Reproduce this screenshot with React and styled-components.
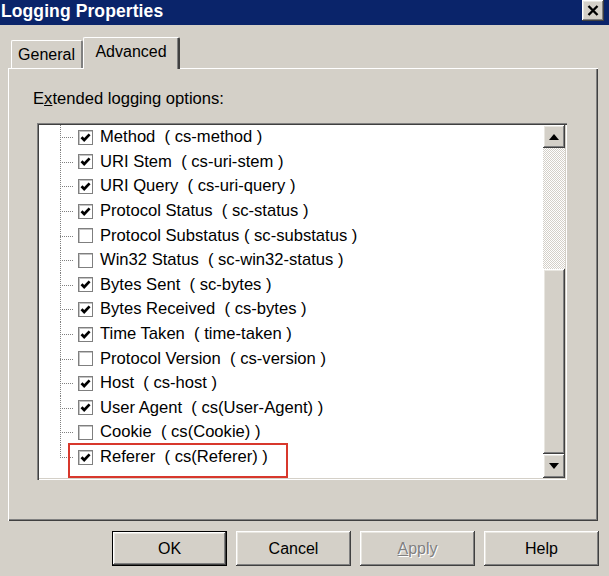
import React from 'react'
import styled, { createGlobalStyle, css } from 'styled-components'

const GlobalStyle = createGlobalStyle`
  html, body {
    margin: 0;
    padding: 0;
    background: #d4d0c8;
  }
  body {
    font-family: 'Liberation Sans', Arial, sans-serif;
    font-size: 16px;
    color: #000;
  }
`

const fields = [
  { label: 'Method', code: 'cs-method', on: true },
  { label: 'URI Stem', code: 'cs-uri-stem', on: true },
  { label: 'URI Query', code: 'cs-uri-query', on: true },
  { label: 'Protocol Status', code: 'sc-status', on: true },
  { label: 'Protocol Substatus', code: 'sc-substatus', on: false, tight: true },
  { label: 'Win32 Status', code: 'sc-win32-status', on: false },
  { label: 'Bytes Sent', code: 'sc-bytes', on: true },
  { label: 'Bytes Received', code: 'cs-bytes', on: true },
  { label: 'Time Taken', code: 'time-taken', on: true },
  { label: 'Protocol Version', code: 'cs-version', on: false },
  { label: 'Host', code: 'cs-host', on: true },
  { label: 'User Agent', code: 'cs(User-Agent)', on: true },
  { label: 'Cookie', code: 'cs(Cookie)', on: false },
  { label: 'Referer', code: 'cs(Referer)', on: true, marked: true },
]

const raised = css`
  background: #d4d0c8;
  box-shadow:
    inset -1px -1px #404040,
    inset 1px 1px #ffffff,
    inset -2px -2px #808080,
    inset 2px 2px #e8e6e0;
`

export default function App() {
  return (
    <>
      <GlobalStyle />
      <Window>
        <TitleBar>
          <Title>Logging Properties</Title>
          <CloseButton>
            <svg width="12" height="11" viewBox="0 0 12 11">
              <path d="M1.5 1 L10.5 10 M10.5 1 L1.5 10" stroke="#000" strokeWidth="2.4" />
            </svg>
          </CloseButton>
        </TitleBar>

        <TabStrip>
          <Tab>General</Tab>
          <Tab $active>Advanced</Tab>
        </TabStrip>

        <Panel>
          <Label>E<u>x</u>tended logging options:</Label>
          <ListBox>
            <Rows>
              {fields.map((f, i) => (
                <Row key={f.code}>
                  <Branch $last={i === fields.length - 1} />
                  <CheckBox>
                    {f.on && (
                      <svg width="11" height="11" viewBox="0 0 11 11">
                        <path d="M1.5 5.2 L4.2 8 L9.6 2.4" fill="none" stroke="#000" strokeWidth="2.7" />
                      </svg>
                    )}
                  </CheckBox>
                  <FieldText>
                    {f.label}{f.tight ? ' ' : '  '}( {f.code} )
                  </FieldText>
                  {f.marked && <Highlight />}
                </Row>
              ))}
            </Rows>
            <ScrollBar>
              <ArrowButton $h={23}>
                <svg width="10" height="6" viewBox="0 0 10 6">
                  <polygon points="5,0 10,6 0,6" fill="#000" />
                </svg>
              </ArrowButton>
              <Track />
              <Thumb />
              <ArrowButton $h={24}>
                <svg width="10" height="6" viewBox="0 0 10 6">
                  <polygon points="0,0 10,0 5,6" fill="#000" />
                </svg>
              </ArrowButton>
            </ScrollBar>
          </ListBox>
        </Panel>

        <ButtonRow>
          <Button $default>OK</Button>
          <Button>Cancel</Button>
          <Button $disabled><u>A</u>pply</Button>
          <Button>Help</Button>
        </ButtonRow>
      </Window>
    </>
  )
}

const Window = styled.div`
  width: 609px;
  height: 576px;
  display: flex;
  flex-direction: column;
  overflow: hidden;
`

const TitleBar = styled.div`
  height: 25px;
  background: #0a246a;
  display: flex;
  align-items: flex-start;
  justify-content: space-between;
  padding: 0 5px 0 1px;
  box-sizing: border-box;
`

const Title = styled.div`
  color: #fff;
  font-weight: bold;
  font-size: 17.5px;
  line-height: 23px;
  letter-spacing: 0.1px;
`

const CloseButton = styled.div`
  ${raised};
  width: 22px;
  height: 21px;
  display: flex;
  align-items: center;
  justify-content: center;
`

const TabStrip = styled.div`
  display: flex;
  align-items: flex-end;
  height: 31px;
  margin: 12px 0 0 11px;
  position: relative;
  z-index: 1;
`

const Tab = styled.div`
  box-sizing: border-box;
  display: flex;
  align-items: center;
  justify-content: center;
  background: #d4d0c8;
  width: ${p => (p.$active ? '97px' : '72px')};
  height: ${p => (p.$active ? '32px' : '28px')};
  margin-bottom: ${p => (p.$active ? '-1px' : '0')};
  padding-bottom: ${p => (p.$active ? '4px' : '0')};
  border-top: 1px solid #fff;
  border-left: 1px solid #fff;
  border-right: 2px solid ${p => (p.$active ? '#404040' : '#808080')};
  border-radius: 2px 2px 0 0;
  box-shadow: ${p => (p.$active ? 'inset -1px 0 #808080' : 'none')};
`

const Panel = styled.div`
  box-sizing: border-box;
  margin-left: 8px;
  width: 590px;
  height: 453px;
  padding: 21px 0 0 25px;
  font-size: 16.6px;
  box-shadow:
    inset 1px 1px #ffffff,
    inset -1px -1px #404040,
    inset -2px -2px #808080;
`

const Label = styled.div`
  line-height: 20px;
  height: 20px;
`

const ListBox = styled.div`
  box-sizing: border-box;
  margin: 14px 0 0 4px;
  width: 530px;
  height: 357px;
  padding: 2px;
  background: #fff;
  display: flex;
  box-shadow:
    inset 1px 1px #808080,
    inset 2px 2px #404040,
    inset -1px -1px #ffffff,
    inset -2px -2px #d4d0c8;
`

const Rows = styled.div`
  flex: 1;
  display: flex;
  flex-direction: column;
`

const Row = styled.div`
  position: relative;
  height: 24.6px;
  display: flex;
  align-items: center;
  flex-shrink: 0;
`

const Branch = styled.div`
  position: relative;
  align-self: stretch;
  width: 14px;
  margin-left: 21px;

  &::before {
    content: '';
    position: absolute;
    left: 0;
    top: 0;
    bottom: ${p => (p.$last ? '50%' : '0')};
    width: 1px;
    background: linear-gradient(to bottom, #808080 50%, transparent 50%);
    background-size: 1px 2px;
  }

  &::after {
    content: '';
    position: absolute;
    left: 0;
    right: 0;
    top: 50%;
    height: 1px;
    background: linear-gradient(to right, #808080 50%, transparent 50%);
    background-size: 2px 1px;
  }
`

const CheckBox = styled.div`
  box-sizing: border-box;
  width: 15px;
  height: 15px;
  margin-left: 4px;
  background: #fff;
  border: 1px solid #7f7f7f;
  box-shadow: inset 1px 1px #c4c4c4;
  display: flex;
  align-items: center;
  justify-content: center;
`

const FieldText = styled.span`
  margin-left: 7px;
  white-space: pre;
  line-height: 20px;
`

const Highlight = styled.div`
  position: absolute;
  left: 29px;
  top: -2px;
  width: 220px;
  height: 35px;
  box-sizing: border-box;
  border: 2px solid #d8382c;
  pointer-events: none;
`

const ScrollBar = styled.div`
  width: 22px;
  display: flex;
  flex-direction: column;
`

const ArrowButton = styled.div`
  ${raised};
  height: ${p => p.$h}px;
  flex-shrink: 0;
  display: flex;
  align-items: center;
  justify-content: center;
`

const Track = styled.div`
  flex: 1;
  background-color: #ffffff;
  background-image: repeating-conic-gradient(#d4d0c8 0 25%, #ffffff 0 50%);
  background-size: 2px 2px;
`

const Thumb = styled.div`
  ${raised};
  height: 185px;
  flex-shrink: 0;
`

const ButtonRow = styled.div`
  display: flex;
  justify-content: flex-end;
  gap: 9px;
  padding: 10px 10px 0 0;
`

const Button = styled.div`
  ${raised};
  box-sizing: border-box;
  width: 115px;
  height: 35px;
  display: flex;
  align-items: center;
  justify-content: center;
  ${p => p.$default && css`
    border: 1px solid #000;
  `}
  ${p => p.$disabled && css`
    color: #808080;
    text-shadow: 1px 1px #ffffff;
  `}
`
